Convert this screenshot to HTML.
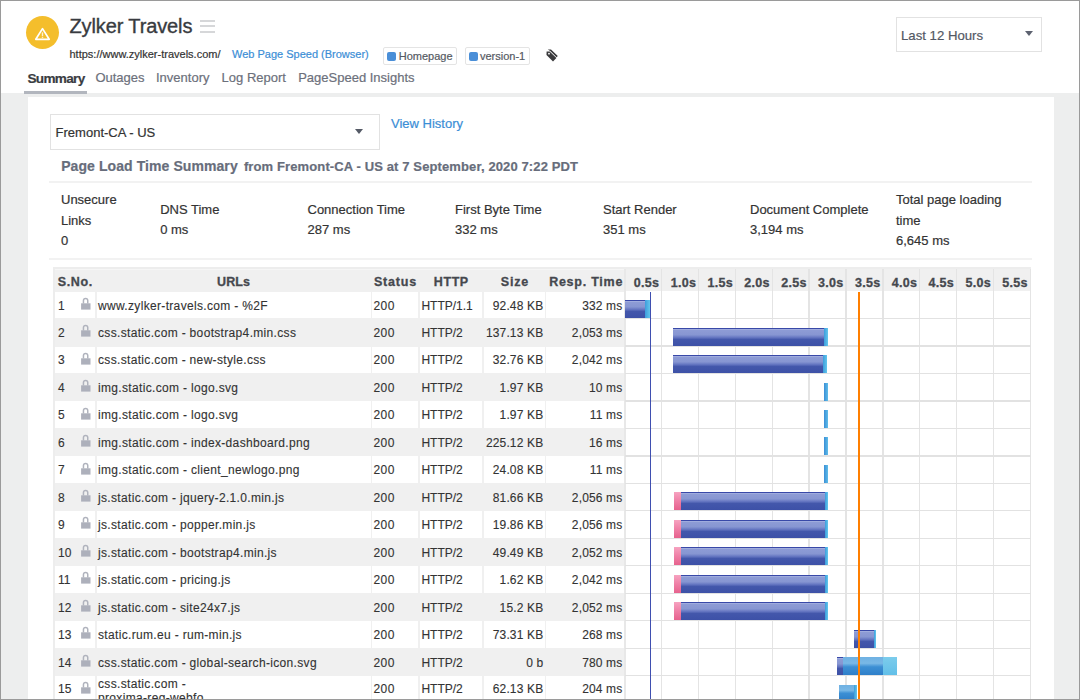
<!DOCTYPE html>
<html><head><meta charset="utf-8"><style>
*{margin:0;padding:0;box-sizing:border-box}
html,body{width:1080px;height:700px;overflow:hidden;background:#fff}
body{position:relative;font-family:"Liberation Sans",sans-serif}
.t{position:absolute;white-space:nowrap;line-height:1;font-family:"Liberation Sans",sans-serif}
.hd{font-size:12.5px;font-weight:bold;color:#45484e;text-align:center;-webkit-text-stroke:0.3px currentColor}
.s{-webkit-text-stroke:0.2px currentColor}
.tb{-webkit-text-stroke:0.12px currentColor}
.ttl{-webkit-text-stroke:0.35px currentColor}
.r{text-align:right}
.circle{position:absolute;left:26.2px;top:16.3px;width:33px;height:33px;border-radius:50%;background:#f4be2c}
.tag{position:absolute;top:47px;height:17.6px;border:1px solid #e4e4e4;border-radius:2px;background:#fff}
.sq{position:absolute;top:52px;width:9px;height:9px;border-radius:2px;background:#4a8fd8}
.box{position:absolute;border:1px solid #e2e2e2;background:#fff}
.arr{position:absolute;width:0;height:0}
.bar{position:absolute}
.bb{background:linear-gradient(#3949a8 0,#3949a8 1px,#aab5e2 1px,#8d9bd5 2.5px,#8796d2 38%,#6677c2 52%,#4357ab 64%,#3d51a7 100%)}
.cy{background:linear-gradient(90deg,#3d9ddc,#63c6ec)}
.sm{background:linear-gradient(90deg,#3b8fd6,#5fbde9)}
.pk{background:linear-gradient(#f6a3c0,#ef7fa6 50%,#e6628d)}
.md{background:linear-gradient(#6fb1e3 0,#79b8e6 35%,#3c8fd4 55%,#2f7fc9 100%)}
.lc{background:linear-gradient(#7cccec,#62bfe8)}
.frame{position:absolute;left:0;top:0;width:1080px;height:700px;border:1px solid #9a9a9a;z-index:10}
</style></head><body>
<div style="position:absolute;left:1px;top:93px;width:1078px;height:606px;background:#edeeee"></div>
<div style="position:absolute;left:27.8px;top:96.5px;width:1025.9px;height:603px;background:#fff"></div>
<div class="circle"></div>
<svg class="warn" width="18" height="15" viewBox="0 0 18 15" style="position:absolute;left:34.3px;top:26.3px">
<path d="M8.5 2.6 L15.2 13.3 L1.8 13.3 Z" fill="none" stroke="#fff" stroke-width="1.7" stroke-linejoin="round"/>
<rect x="7.8" y="6.4" width="1.4" height="3.6" fill="#fff" opacity="0.8"/><rect x="7.8" y="10.7" width="1.4" height="1.2" fill="#fff" opacity="0.8"/></svg>
<div class="t ttl" style="left:69.50px;top:16.10px;font-size:20px;color:#383b40;letter-spacing:-0.12px;">Zylker Travels</div>

<div style="position:absolute;left:200.2px;top:20.3px;width:15.2px;height:2.2px;background:#d6d7d9"></div>
<div style="position:absolute;left:200.2px;top:25.3px;width:15.2px;height:2.2px;background:#d6d7d9"></div>
<div style="position:absolute;left:200.2px;top:30.5px;width:15.2px;height:2.2px;background:#d6d7d9"></div>
<div class="t s" style="left:69.50px;top:49.07px;font-size:11px;color:#333;">https://www.zylker-travels.com/</div>

<div class="t s" style="left:232.00px;top:49.07px;font-size:11px;color:#3b8ed6;">Web Page Speed (Browser)</div>

<div class="tag" style="left:383px;width:74px"></div><div class="sq" style="left:386.5px"></div>
<div class="t s" style="left:398.70px;top:51.07px;font-size:11px;color:#555a63;">Homepage</div>

<div class="tag" style="left:465px;width:65px"></div><div class="sq" style="left:468.5px"></div>
<div class="t s" style="left:480.00px;top:51.07px;font-size:11px;color:#555a63;">version-1</div>

<svg width="14" height="15" viewBox="0 0 14 15" style="position:absolute;left:544.5px;top:47.5px">
<path d="M1.6 3.6 L4.6 3.4 L11.4 10.1 L8 13.4 L1.5 6.9 Z" fill="#3a3a3c"/>
<path d="M2.8 1.6 L6 1.5 L12.8 8.1 L11.6 9.3 L5.2 2.9 Z" fill="#3a3a3c"/>
<circle cx="4" cy="5.7" r="0.9" fill="#fff"/></svg>
<div class="t s" style="left:27.50px;top:71.71px;font-size:13.6px;font-weight:bold;color:#3a3c41;letter-spacing:-0.7px;">Summary</div>

<div class="t s" style="left:95.40px;top:71.21px;font-size:13px;color:#6c707b;">Outages</div>

<div class="t s" style="left:156.00px;top:71.21px;font-size:13px;color:#6c707b;">Inventory</div>

<div class="t s" style="left:221.60px;top:71.21px;font-size:13px;color:#6c707b;">Log Report</div>

<div class="t s" style="left:298.20px;top:71.21px;font-size:13px;color:#6c707b;">PageSpeed Insights</div>

<div style="position:absolute;left:24px;top:90.5px;width:63px;height:3px;background:#b2b6be"></div>
<div class="box" style="left:896px;top:17px;width:146px;height:34.5px"></div>
<div class="t s" style="left:901.00px;top:29.24px;font-size:13.2px;color:#535864;">Last 12 Hours</div>

<div class="arr" style="left:1024.5px;top:31px;border-left:4px solid transparent;border-right:4px solid transparent;border-top:5px solid #5d6270"></div>
<div class="box" style="left:50px;top:114.3px;width:329.5px;height:35.4px"></div>
<div class="t s" style="left:55.60px;top:126.11px;font-size:13px;color:#333;">Fremont-CA - US</div>

<div class="arr" style="left:354.5px;top:128.5px;border-left:4px solid transparent;border-right:4px solid transparent;border-top:5px solid #555a66"></div>
<div class="t s" style="left:391.00px;top:117.01px;font-size:13px;color:#3b8ed6;">View History</div>

<div class="t s" style="left:61.20px;top:158.88px;font-size:14px;font-weight:bold;color:#676d7b;letter-spacing:0.08px;">Page Load Time Summary</div>

<div class="t s" style="left:243.90px;top:159.71px;font-size:13px;font-weight:bold;color:#676d7b;letter-spacing:0.12px;">from Fremont-CA - US at 7 September, 2020 7:22 PDT</div>

<div style="position:absolute;left:49px;top:180.8px;width:982.5px;height:2px;background:#f2f2f2"></div>
<div class="t s" style="left:61.00px;top:193.11px;font-size:13px;color:#333;">Unsecure</div>

<div class="t s" style="left:61.00px;top:213.81px;font-size:13px;color:#333;">Links</div>

<div class="t s" style="left:61.00px;top:234.01px;font-size:13px;color:#333;">0</div>

<div class="t s" style="left:160.20px;top:203.41px;font-size:13px;color:#333;">DNS Time</div>

<div class="t s" style="left:160.20px;top:222.91px;font-size:13px;color:#333;">0 ms</div>

<div class="t s" style="left:307.50px;top:203.41px;font-size:13px;color:#333;">Connection Time</div>

<div class="t s" style="left:307.50px;top:222.91px;font-size:13px;color:#333;">287 ms</div>

<div class="t s" style="left:455.00px;top:203.41px;font-size:13px;color:#333;">First Byte Time</div>

<div class="t s" style="left:455.00px;top:222.91px;font-size:13px;color:#333;">332 ms</div>

<div class="t s" style="left:603.00px;top:203.41px;font-size:13px;color:#333;">Start Render</div>

<div class="t s" style="left:603.00px;top:222.91px;font-size:13px;color:#333;">351 ms</div>

<div class="t s" style="left:750.00px;top:203.41px;font-size:13px;color:#333;">Document Complete</div>

<div class="t s" style="left:750.00px;top:222.91px;font-size:13px;color:#333;">3,194 ms</div>

<div class="t s" style="left:896.00px;top:193.11px;font-size:13px;color:#333;">Total page loading</div>

<div class="t s" style="left:896.00px;top:213.81px;font-size:13px;color:#333;">time</div>

<div class="t s" style="left:896.00px;top:234.01px;font-size:13px;color:#333;">6,645 ms</div>

<div style="position:absolute;left:49px;top:258.2px;width:982.5px;height:2px;background:#f2f2f2"></div>
<div style="position:absolute;left:53px;top:267px;width:978px;height:433px;background:#ededed"></div>
<div style="position:absolute;left:55px;top:269px;width:976px;height:431px;background:#f0f0f0"></div>
<div style="position:absolute;left:55px;top:269px;width:976px;height:1px;background:#f6f6f6"></div>
<div style="position:absolute;left:55px;top:291.57px;width:40.25px;height:26.57px;background:#fff"></div>
<div style="position:absolute;left:96.75px;top:291.57px;width:273.90px;height:26.57px;background:#fff"></div>
<div style="position:absolute;left:372.15px;top:291.57px;width:46.10px;height:26.57px;background:#fff"></div>
<div style="position:absolute;left:419.75px;top:291.57px;width:62.40px;height:26.57px;background:#fff"></div>
<div style="position:absolute;left:483.65px;top:291.57px;width:61.20px;height:26.57px;background:#fff"></div>
<div style="position:absolute;left:546.35px;top:291.57px;width:78.05px;height:26.57px;background:#fff"></div>
<div class="t tb" style="left:58.00px;top:299.96px;font-size:12px;color:#333;">1</div>

<svg width="12" height="14" viewBox="0 -1 12 14" style="position:absolute;left:80.1px;top:296.72px"><path d="M3.45 5.6 V2.6 A2.15 2.15 0 0 1 7.75 2.6 V5.6" fill="none" stroke="#b0b3bd" stroke-width="1.5"/><rect x="1.1" y="5.3" width="9.4" height="6.3" fill="#adb0bb"/></svg>
<div class="t tb" style="left:98.00px;top:299.96px;font-size:12px;color:#333;letter-spacing:0.33px;">www.zylker-travels.com - %2F</div>

<div class="t tb" style="left:373.50px;top:299.96px;font-size:12px;color:#333;letter-spacing:0.4px;">200</div>

<div class="t tb" style="left:421.40px;top:299.96px;font-size:12px;color:#333;">HTTP/1.1</div>

<div class="t r tb" style="right:536.7px;top:299.96px;font-size:12px;color:#333;letter-spacing:0.15px">92.48 KB</div>
<div class="t r tb" style="right:457.6px;top:299.96px;font-size:12px;color:#333;letter-spacing:0.15px">332 ms</div>
<div class="t tb" style="left:58.00px;top:326.93px;font-size:12px;color:#333;">2</div>

<svg width="12" height="14" viewBox="0 -1 12 14" style="position:absolute;left:80.1px;top:324.19px"><path d="M3.45 5.6 V2.6 A2.15 2.15 0 0 1 7.75 2.6 V5.6" fill="none" stroke="#b0b3bd" stroke-width="1.5"/><rect x="1.1" y="5.3" width="9.4" height="6.3" fill="#adb0bb"/></svg>
<div class="t tb" style="left:98.00px;top:326.93px;font-size:12px;color:#333;letter-spacing:0.33px;">css.static.com - bootstrap4.min.css</div>

<div class="t tb" style="left:373.50px;top:326.93px;font-size:12px;color:#333;letter-spacing:0.4px;">200</div>

<div class="t tb" style="left:421.40px;top:326.93px;font-size:12px;color:#333;">HTTP/2</div>

<div class="t r tb" style="right:536.7px;top:326.93px;font-size:12px;color:#333;letter-spacing:0.15px">137.13 KB</div>
<div class="t r tb" style="right:457.6px;top:326.93px;font-size:12px;color:#333;letter-spacing:0.15px">2,053 ms</div>
<div style="position:absolute;left:55px;top:346.51px;width:40.25px;height:26.57px;background:#fff"></div>
<div style="position:absolute;left:96.75px;top:346.51px;width:273.90px;height:26.57px;background:#fff"></div>
<div style="position:absolute;left:372.15px;top:346.51px;width:46.10px;height:26.57px;background:#fff"></div>
<div style="position:absolute;left:419.75px;top:346.51px;width:62.40px;height:26.57px;background:#fff"></div>
<div style="position:absolute;left:483.65px;top:346.51px;width:61.20px;height:26.57px;background:#fff"></div>
<div style="position:absolute;left:546.35px;top:346.51px;width:78.05px;height:26.57px;background:#fff"></div>
<div class="t tb" style="left:58.00px;top:354.40px;font-size:12px;color:#333;">3</div>

<svg width="12" height="14" viewBox="0 -1 12 14" style="position:absolute;left:80.1px;top:351.66px"><path d="M3.45 5.6 V2.6 A2.15 2.15 0 0 1 7.75 2.6 V5.6" fill="none" stroke="#b0b3bd" stroke-width="1.5"/><rect x="1.1" y="5.3" width="9.4" height="6.3" fill="#adb0bb"/></svg>
<div class="t tb" style="left:98.00px;top:354.40px;font-size:12px;color:#333;letter-spacing:0.33px;">css.static.com - new-style.css</div>

<div class="t tb" style="left:373.50px;top:354.40px;font-size:12px;color:#333;letter-spacing:0.4px;">200</div>

<div class="t tb" style="left:421.40px;top:354.40px;font-size:12px;color:#333;">HTTP/2</div>

<div class="t r tb" style="right:536.7px;top:354.40px;font-size:12px;color:#333;letter-spacing:0.15px">32.76 KB</div>
<div class="t r tb" style="right:457.6px;top:354.40px;font-size:12px;color:#333;letter-spacing:0.15px">2,042 ms</div>
<div class="t tb" style="left:58.00px;top:381.87px;font-size:12px;color:#333;">4</div>

<svg width="12" height="14" viewBox="0 -1 12 14" style="position:absolute;left:80.1px;top:379.13px"><path d="M3.45 5.6 V2.6 A2.15 2.15 0 0 1 7.75 2.6 V5.6" fill="none" stroke="#b0b3bd" stroke-width="1.5"/><rect x="1.1" y="5.3" width="9.4" height="6.3" fill="#adb0bb"/></svg>
<div class="t tb" style="left:98.00px;top:381.87px;font-size:12px;color:#333;letter-spacing:0.33px;">img.static.com - logo.svg</div>

<div class="t tb" style="left:373.50px;top:381.87px;font-size:12px;color:#333;letter-spacing:0.4px;">200</div>

<div class="t tb" style="left:421.40px;top:381.87px;font-size:12px;color:#333;">HTTP/2</div>

<div class="t r tb" style="right:536.7px;top:381.87px;font-size:12px;color:#333;letter-spacing:0.15px">1.97 KB</div>
<div class="t r tb" style="right:457.6px;top:381.87px;font-size:12px;color:#333;letter-spacing:0.15px">10 ms</div>
<div style="position:absolute;left:55px;top:401.45px;width:40.25px;height:26.57px;background:#fff"></div>
<div style="position:absolute;left:96.75px;top:401.45px;width:273.90px;height:26.57px;background:#fff"></div>
<div style="position:absolute;left:372.15px;top:401.45px;width:46.10px;height:26.57px;background:#fff"></div>
<div style="position:absolute;left:419.75px;top:401.45px;width:62.40px;height:26.57px;background:#fff"></div>
<div style="position:absolute;left:483.65px;top:401.45px;width:61.20px;height:26.57px;background:#fff"></div>
<div style="position:absolute;left:546.35px;top:401.45px;width:78.05px;height:26.57px;background:#fff"></div>
<div class="t tb" style="left:58.00px;top:409.34px;font-size:12px;color:#333;">5</div>

<svg width="12" height="14" viewBox="0 -1 12 14" style="position:absolute;left:80.1px;top:406.60px"><path d="M3.45 5.6 V2.6 A2.15 2.15 0 0 1 7.75 2.6 V5.6" fill="none" stroke="#b0b3bd" stroke-width="1.5"/><rect x="1.1" y="5.3" width="9.4" height="6.3" fill="#adb0bb"/></svg>
<div class="t tb" style="left:98.00px;top:409.34px;font-size:12px;color:#333;letter-spacing:0.33px;">img.static.com - logo.svg</div>

<div class="t tb" style="left:373.50px;top:409.34px;font-size:12px;color:#333;letter-spacing:0.4px;">200</div>

<div class="t tb" style="left:421.40px;top:409.34px;font-size:12px;color:#333;">HTTP/2</div>

<div class="t r tb" style="right:536.7px;top:409.34px;font-size:12px;color:#333;letter-spacing:0.15px">1.97 KB</div>
<div class="t r tb" style="right:457.6px;top:409.34px;font-size:12px;color:#333;letter-spacing:0.15px">11 ms</div>
<div class="t tb" style="left:58.00px;top:436.81px;font-size:12px;color:#333;">6</div>

<svg width="12" height="14" viewBox="0 -1 12 14" style="position:absolute;left:80.1px;top:434.07px"><path d="M3.45 5.6 V2.6 A2.15 2.15 0 0 1 7.75 2.6 V5.6" fill="none" stroke="#b0b3bd" stroke-width="1.5"/><rect x="1.1" y="5.3" width="9.4" height="6.3" fill="#adb0bb"/></svg>
<div class="t tb" style="left:98.00px;top:436.81px;font-size:12px;color:#333;letter-spacing:0.33px;">img.static.com - index-dashboard.png</div>

<div class="t tb" style="left:373.50px;top:436.81px;font-size:12px;color:#333;letter-spacing:0.4px;">200</div>

<div class="t tb" style="left:421.40px;top:436.81px;font-size:12px;color:#333;">HTTP/2</div>

<div class="t r tb" style="right:536.7px;top:436.81px;font-size:12px;color:#333;letter-spacing:0.15px">225.12 KB</div>
<div class="t r tb" style="right:457.6px;top:436.81px;font-size:12px;color:#333;letter-spacing:0.15px">16 ms</div>
<div style="position:absolute;left:55px;top:456.39px;width:40.25px;height:26.57px;background:#fff"></div>
<div style="position:absolute;left:96.75px;top:456.39px;width:273.90px;height:26.57px;background:#fff"></div>
<div style="position:absolute;left:372.15px;top:456.39px;width:46.10px;height:26.57px;background:#fff"></div>
<div style="position:absolute;left:419.75px;top:456.39px;width:62.40px;height:26.57px;background:#fff"></div>
<div style="position:absolute;left:483.65px;top:456.39px;width:61.20px;height:26.57px;background:#fff"></div>
<div style="position:absolute;left:546.35px;top:456.39px;width:78.05px;height:26.57px;background:#fff"></div>
<div class="t tb" style="left:58.00px;top:464.28px;font-size:12px;color:#333;">7</div>

<svg width="12" height="14" viewBox="0 -1 12 14" style="position:absolute;left:80.1px;top:461.54px"><path d="M3.45 5.6 V2.6 A2.15 2.15 0 0 1 7.75 2.6 V5.6" fill="none" stroke="#b0b3bd" stroke-width="1.5"/><rect x="1.1" y="5.3" width="9.4" height="6.3" fill="#adb0bb"/></svg>
<div class="t tb" style="left:98.00px;top:464.28px;font-size:12px;color:#333;letter-spacing:0.33px;">img.static.com - client_newlogo.png</div>

<div class="t tb" style="left:373.50px;top:464.28px;font-size:12px;color:#333;letter-spacing:0.4px;">200</div>

<div class="t tb" style="left:421.40px;top:464.28px;font-size:12px;color:#333;">HTTP/2</div>

<div class="t r tb" style="right:536.7px;top:464.28px;font-size:12px;color:#333;letter-spacing:0.15px">24.08 KB</div>
<div class="t r tb" style="right:457.6px;top:464.28px;font-size:12px;color:#333;letter-spacing:0.15px">11 ms</div>
<div class="t tb" style="left:58.00px;top:491.75px;font-size:12px;color:#333;">8</div>

<svg width="12" height="14" viewBox="0 -1 12 14" style="position:absolute;left:80.1px;top:489.01px"><path d="M3.45 5.6 V2.6 A2.15 2.15 0 0 1 7.75 2.6 V5.6" fill="none" stroke="#b0b3bd" stroke-width="1.5"/><rect x="1.1" y="5.3" width="9.4" height="6.3" fill="#adb0bb"/></svg>
<div class="t tb" style="left:98.00px;top:491.75px;font-size:12px;color:#333;letter-spacing:0.33px;">js.static.com - jquery-2.1.0.min.js</div>

<div class="t tb" style="left:373.50px;top:491.75px;font-size:12px;color:#333;letter-spacing:0.4px;">200</div>

<div class="t tb" style="left:421.40px;top:491.75px;font-size:12px;color:#333;">HTTP/2</div>

<div class="t r tb" style="right:536.7px;top:491.75px;font-size:12px;color:#333;letter-spacing:0.15px">81.66 KB</div>
<div class="t r tb" style="right:457.6px;top:491.75px;font-size:12px;color:#333;letter-spacing:0.15px">2,056 ms</div>
<div style="position:absolute;left:55px;top:511.33px;width:40.25px;height:26.57px;background:#fff"></div>
<div style="position:absolute;left:96.75px;top:511.33px;width:273.90px;height:26.57px;background:#fff"></div>
<div style="position:absolute;left:372.15px;top:511.33px;width:46.10px;height:26.57px;background:#fff"></div>
<div style="position:absolute;left:419.75px;top:511.33px;width:62.40px;height:26.57px;background:#fff"></div>
<div style="position:absolute;left:483.65px;top:511.33px;width:61.20px;height:26.57px;background:#fff"></div>
<div style="position:absolute;left:546.35px;top:511.33px;width:78.05px;height:26.57px;background:#fff"></div>
<div class="t tb" style="left:58.00px;top:519.22px;font-size:12px;color:#333;">9</div>

<svg width="12" height="14" viewBox="0 -1 12 14" style="position:absolute;left:80.1px;top:516.48px"><path d="M3.45 5.6 V2.6 A2.15 2.15 0 0 1 7.75 2.6 V5.6" fill="none" stroke="#b0b3bd" stroke-width="1.5"/><rect x="1.1" y="5.3" width="9.4" height="6.3" fill="#adb0bb"/></svg>
<div class="t tb" style="left:98.00px;top:519.22px;font-size:12px;color:#333;letter-spacing:0.33px;">js.static.com - popper.min.js</div>

<div class="t tb" style="left:373.50px;top:519.22px;font-size:12px;color:#333;letter-spacing:0.4px;">200</div>

<div class="t tb" style="left:421.40px;top:519.22px;font-size:12px;color:#333;">HTTP/2</div>

<div class="t r tb" style="right:536.7px;top:519.22px;font-size:12px;color:#333;letter-spacing:0.15px">19.86 KB</div>
<div class="t r tb" style="right:457.6px;top:519.22px;font-size:12px;color:#333;letter-spacing:0.15px">2,056 ms</div>
<div class="t tb" style="left:58.00px;top:546.69px;font-size:12px;color:#333;">10</div>

<svg width="12" height="14" viewBox="0 -1 12 14" style="position:absolute;left:80.1px;top:543.95px"><path d="M3.45 5.6 V2.6 A2.15 2.15 0 0 1 7.75 2.6 V5.6" fill="none" stroke="#b0b3bd" stroke-width="1.5"/><rect x="1.1" y="5.3" width="9.4" height="6.3" fill="#adb0bb"/></svg>
<div class="t tb" style="left:98.00px;top:546.69px;font-size:12px;color:#333;letter-spacing:0.33px;">js.static.com - bootstrap4.min.js</div>

<div class="t tb" style="left:373.50px;top:546.69px;font-size:12px;color:#333;letter-spacing:0.4px;">200</div>

<div class="t tb" style="left:421.40px;top:546.69px;font-size:12px;color:#333;">HTTP/2</div>

<div class="t r tb" style="right:536.7px;top:546.69px;font-size:12px;color:#333;letter-spacing:0.15px">49.49 KB</div>
<div class="t r tb" style="right:457.6px;top:546.69px;font-size:12px;color:#333;letter-spacing:0.15px">2,052 ms</div>
<div style="position:absolute;left:55px;top:566.27px;width:40.25px;height:26.57px;background:#fff"></div>
<div style="position:absolute;left:96.75px;top:566.27px;width:273.90px;height:26.57px;background:#fff"></div>
<div style="position:absolute;left:372.15px;top:566.27px;width:46.10px;height:26.57px;background:#fff"></div>
<div style="position:absolute;left:419.75px;top:566.27px;width:62.40px;height:26.57px;background:#fff"></div>
<div style="position:absolute;left:483.65px;top:566.27px;width:61.20px;height:26.57px;background:#fff"></div>
<div style="position:absolute;left:546.35px;top:566.27px;width:78.05px;height:26.57px;background:#fff"></div>
<div class="t tb" style="left:58.00px;top:574.16px;font-size:12px;color:#333;">11</div>

<svg width="12" height="14" viewBox="0 -1 12 14" style="position:absolute;left:80.1px;top:571.42px"><path d="M3.45 5.6 V2.6 A2.15 2.15 0 0 1 7.75 2.6 V5.6" fill="none" stroke="#b0b3bd" stroke-width="1.5"/><rect x="1.1" y="5.3" width="9.4" height="6.3" fill="#adb0bb"/></svg>
<div class="t tb" style="left:98.00px;top:574.16px;font-size:12px;color:#333;letter-spacing:0.33px;">js.static.com - pricing.js</div>

<div class="t tb" style="left:373.50px;top:574.16px;font-size:12px;color:#333;letter-spacing:0.4px;">200</div>

<div class="t tb" style="left:421.40px;top:574.16px;font-size:12px;color:#333;">HTTP/2</div>

<div class="t r tb" style="right:536.7px;top:574.16px;font-size:12px;color:#333;letter-spacing:0.15px">1.62 KB</div>
<div class="t r tb" style="right:457.6px;top:574.16px;font-size:12px;color:#333;letter-spacing:0.15px">2,042 ms</div>
<div class="t tb" style="left:58.00px;top:601.63px;font-size:12px;color:#333;">12</div>

<svg width="12" height="14" viewBox="0 -1 12 14" style="position:absolute;left:80.1px;top:598.89px"><path d="M3.45 5.6 V2.6 A2.15 2.15 0 0 1 7.75 2.6 V5.6" fill="none" stroke="#b0b3bd" stroke-width="1.5"/><rect x="1.1" y="5.3" width="9.4" height="6.3" fill="#adb0bb"/></svg>
<div class="t tb" style="left:98.00px;top:601.63px;font-size:12px;color:#333;letter-spacing:0.33px;">js.static.com - site24x7.js</div>

<div class="t tb" style="left:373.50px;top:601.63px;font-size:12px;color:#333;letter-spacing:0.4px;">200</div>

<div class="t tb" style="left:421.40px;top:601.63px;font-size:12px;color:#333;">HTTP/2</div>

<div class="t r tb" style="right:536.7px;top:601.63px;font-size:12px;color:#333;letter-spacing:0.15px">15.2 KB</div>
<div class="t r tb" style="right:457.6px;top:601.63px;font-size:12px;color:#333;letter-spacing:0.15px">2,052 ms</div>
<div style="position:absolute;left:55px;top:621.21px;width:40.25px;height:26.57px;background:#fff"></div>
<div style="position:absolute;left:96.75px;top:621.21px;width:273.90px;height:26.57px;background:#fff"></div>
<div style="position:absolute;left:372.15px;top:621.21px;width:46.10px;height:26.57px;background:#fff"></div>
<div style="position:absolute;left:419.75px;top:621.21px;width:62.40px;height:26.57px;background:#fff"></div>
<div style="position:absolute;left:483.65px;top:621.21px;width:61.20px;height:26.57px;background:#fff"></div>
<div style="position:absolute;left:546.35px;top:621.21px;width:78.05px;height:26.57px;background:#fff"></div>
<div class="t tb" style="left:58.00px;top:629.10px;font-size:12px;color:#333;">13</div>

<svg width="12" height="14" viewBox="0 -1 12 14" style="position:absolute;left:80.1px;top:626.36px"><path d="M3.45 5.6 V2.6 A2.15 2.15 0 0 1 7.75 2.6 V5.6" fill="none" stroke="#b0b3bd" stroke-width="1.5"/><rect x="1.1" y="5.3" width="9.4" height="6.3" fill="#adb0bb"/></svg>
<div class="t tb" style="left:98.00px;top:629.10px;font-size:12px;color:#333;letter-spacing:0.33px;">static.rum.eu - rum-min.js</div>

<div class="t tb" style="left:373.50px;top:629.10px;font-size:12px;color:#333;letter-spacing:0.4px;">200</div>

<div class="t tb" style="left:421.40px;top:629.10px;font-size:12px;color:#333;">HTTP/2</div>

<div class="t r tb" style="right:536.7px;top:629.10px;font-size:12px;color:#333;letter-spacing:0.15px">73.31 KB</div>
<div class="t r tb" style="right:457.6px;top:629.10px;font-size:12px;color:#333;letter-spacing:0.15px">268 ms</div>
<div class="t tb" style="left:58.00px;top:656.57px;font-size:12px;color:#333;">14</div>

<svg width="12" height="14" viewBox="0 -1 12 14" style="position:absolute;left:80.1px;top:653.83px"><path d="M3.45 5.6 V2.6 A2.15 2.15 0 0 1 7.75 2.6 V5.6" fill="none" stroke="#b0b3bd" stroke-width="1.5"/><rect x="1.1" y="5.3" width="9.4" height="6.3" fill="#adb0bb"/></svg>
<div class="t tb" style="left:98.00px;top:656.57px;font-size:12px;color:#333;letter-spacing:0.33px;">css.static.com - global-search-icon.svg</div>

<div class="t tb" style="left:373.50px;top:656.57px;font-size:12px;color:#333;letter-spacing:0.4px;">200</div>

<div class="t tb" style="left:421.40px;top:656.57px;font-size:12px;color:#333;">HTTP/2</div>

<div class="t r tb" style="right:536.7px;top:656.57px;font-size:12px;color:#333;letter-spacing:0.15px">0 b</div>
<div class="t r tb" style="right:457.6px;top:656.57px;font-size:12px;color:#333;letter-spacing:0.15px">780 ms</div>
<div style="position:absolute;left:55px;top:676.15px;width:40.25px;height:24.30px;background:#fff"></div>
<div style="position:absolute;left:96.75px;top:676.15px;width:273.90px;height:24.30px;background:#fff"></div>
<div style="position:absolute;left:372.15px;top:676.15px;width:46.10px;height:24.30px;background:#fff"></div>
<div style="position:absolute;left:419.75px;top:676.15px;width:62.40px;height:24.30px;background:#fff"></div>
<div style="position:absolute;left:483.65px;top:676.15px;width:61.20px;height:24.30px;background:#fff"></div>
<div style="position:absolute;left:546.35px;top:676.15px;width:78.05px;height:24.30px;background:#fff"></div>
<div class="t tb" style="left:58.00px;top:683.34px;font-size:12px;color:#333;">15</div>

<svg width="12" height="14" viewBox="0 -1 12 14" style="position:absolute;left:80.1px;top:681.30px"><path d="M3.45 5.6 V2.6 A2.15 2.15 0 0 1 7.75 2.6 V5.6" fill="none" stroke="#b0b3bd" stroke-width="1.5"/><rect x="1.1" y="5.3" width="9.4" height="6.3" fill="#adb0bb"/></svg>
<div class="t tb" style="left:98px;top:676.74px;font-size:12px;line-height:14px;color:#333;letter-spacing:0.33px;">css.static.com -<br>proxima-reg-webfo</div>
<div class="t tb" style="left:373.50px;top:683.34px;font-size:12px;color:#333;letter-spacing:0.4px;">200</div>

<div class="t tb" style="left:421.40px;top:683.34px;font-size:12px;color:#333;">HTTP/2</div>

<div class="t r tb" style="right:536.7px;top:683.34px;font-size:12px;color:#333;letter-spacing:0.15px">62.13 KB</div>
<div class="t r tb" style="right:457.6px;top:683.34px;font-size:12px;color:#333;letter-spacing:0.15px">204 ms</div>
<div class="t hd" style="left:57.8px;top:275.52px;letter-spacing:0.6px">S.No.</div>
<div class="t hd" style="left:97px;width:273px;top:275.52px;letter-spacing:0.1px;text-indent:0.1px">URLs</div>
<div class="t hd" style="left:372px;width:46px;top:275.52px;letter-spacing:0.8px;text-indent:0.8px">Status</div>
<div class="t hd" style="left:420px;width:62px;top:275.52px;letter-spacing:0.6px;text-indent:0.6px">HTTP</div>
<div class="t hd" style="left:484px;width:61px;top:275.52px;letter-spacing:0.75px;text-indent:0.75px">Size</div>
<div class="t hd" style="left:547px;width:77.5px;top:275.52px;letter-spacing:0.75px;text-indent:0.75px">Resp. Time</div>
<div style="position:absolute;left:624.95px;top:269px;width:406.04999999999995px;height:22.120000000000005px;background:#f0f0f0"></div>
<div style="position:absolute;left:624.4px;top:291.12px;width:406.60px;height:408.88px;background:#fff"></div>
<div style="position:absolute;left:624.4px;top:269px;width:1.5px;height:431px;background:#e8e8e8"></div>
<div style="position:absolute;left:661.05px;top:269px;width:1.4px;height:431px;background:#e4e4e4"></div>
<div class="t hd" style="right:420.70px;top:277.02px;letter-spacing:0.3px">0.5s</div>
<div style="position:absolute;left:697.90px;top:269px;width:1.4px;height:431px;background:#e4e4e4"></div>
<div class="t hd" style="right:383.85px;top:277.02px;letter-spacing:0.3px">1.0s</div>
<div style="position:absolute;left:734.75px;top:269px;width:1.4px;height:431px;background:#e4e4e4"></div>
<div class="t hd" style="right:347.00px;top:277.02px;letter-spacing:0.3px">1.5s</div>
<div style="position:absolute;left:771.60px;top:269px;width:1.4px;height:431px;background:#e4e4e4"></div>
<div class="t hd" style="right:310.15px;top:277.02px;letter-spacing:0.3px">2.0s</div>
<div style="position:absolute;left:808.45px;top:269px;width:1.4px;height:431px;background:#e4e4e4"></div>
<div class="t hd" style="right:273.30px;top:277.02px;letter-spacing:0.3px">2.5s</div>
<div style="position:absolute;left:845.30px;top:269px;width:1.4px;height:431px;background:#e4e4e4"></div>
<div class="t hd" style="right:236.45px;top:277.02px;letter-spacing:0.3px">3.0s</div>
<div style="position:absolute;left:882.15px;top:269px;width:1.4px;height:431px;background:#e4e4e4"></div>
<div class="t hd" style="right:199.60px;top:277.02px;letter-spacing:0.3px">3.5s</div>
<div style="position:absolute;left:919.00px;top:269px;width:1.4px;height:431px;background:#e4e4e4"></div>
<div class="t hd" style="right:162.75px;top:277.02px;letter-spacing:0.3px">4.0s</div>
<div style="position:absolute;left:955.85px;top:269px;width:1.4px;height:431px;background:#e4e4e4"></div>
<div class="t hd" style="right:125.90px;top:277.02px;letter-spacing:0.3px">4.5s</div>
<div style="position:absolute;left:992.70px;top:269px;width:1.4px;height:431px;background:#e4e4e4"></div>
<div class="t hd" style="right:89.05px;top:277.02px;letter-spacing:0.3px">5.0s</div>
<div style="position:absolute;left:1029.55px;top:269px;width:1.4px;height:431px;background:#e4e4e4"></div>
<div class="t hd" style="right:52.20px;top:277.02px;letter-spacing:0.3px">5.5s</div>
<div style="position:absolute;left:624.95px;top:317.99px;width:406.04999999999995px;height:1.2px;background:#e2e2e2"></div>
<div style="position:absolute;left:624.95px;top:345.46px;width:406.04999999999995px;height:1.2px;background:#e2e2e2"></div>
<div style="position:absolute;left:624.95px;top:372.93px;width:406.04999999999995px;height:1.2px;background:#e2e2e2"></div>
<div style="position:absolute;left:624.95px;top:400.40px;width:406.04999999999995px;height:1.2px;background:#e2e2e2"></div>
<div style="position:absolute;left:624.95px;top:427.87px;width:406.04999999999995px;height:1.2px;background:#e2e2e2"></div>
<div style="position:absolute;left:624.95px;top:455.34px;width:406.04999999999995px;height:1.2px;background:#e2e2e2"></div>
<div style="position:absolute;left:624.95px;top:482.81px;width:406.04999999999995px;height:1.2px;background:#e2e2e2"></div>
<div style="position:absolute;left:624.95px;top:510.28px;width:406.04999999999995px;height:1.2px;background:#e2e2e2"></div>
<div style="position:absolute;left:624.95px;top:537.75px;width:406.04999999999995px;height:1.2px;background:#e2e2e2"></div>
<div style="position:absolute;left:624.95px;top:565.22px;width:406.04999999999995px;height:1.2px;background:#e2e2e2"></div>
<div style="position:absolute;left:624.95px;top:592.69px;width:406.04999999999995px;height:1.2px;background:#e2e2e2"></div>
<div style="position:absolute;left:624.95px;top:620.16px;width:406.04999999999995px;height:1.2px;background:#e2e2e2"></div>
<div style="position:absolute;left:624.95px;top:647.63px;width:406.04999999999995px;height:1.2px;background:#e2e2e2"></div>
<div style="position:absolute;left:624.95px;top:675.10px;width:406.04999999999995px;height:1.2px;background:#e2e2e2"></div>
<div class="bar bb" style="left:625.00px;top:300.12px;width:19.50px;height:18px"></div><div class="bar cy" style="left:644.50px;top:300.12px;width:5.50px;height:18px"></div>
<div class="bar bb" style="left:673.00px;top:327.59px;width:151.10px;height:18px"></div><div class="bar cy" style="left:824.10px;top:327.59px;width:3.50px;height:18px"></div>
<div class="bar bb" style="left:673.00px;top:355.06px;width:150.30px;height:18px"></div><div class="bar cy" style="left:823.30px;top:355.06px;width:3.50px;height:18px"></div>
<div class="bar sm" style="left:824px;top:382.53px;width:4px;height:18px"></div>
<div class="bar sm" style="left:824px;top:410.00px;width:4px;height:18px"></div>
<div class="bar sm" style="left:824px;top:437.47px;width:4px;height:18px"></div>
<div class="bar sm" style="left:824px;top:464.94px;width:4px;height:18px"></div>
<div class="bar pk" style="left:674px;top:492.41px;width:7px;height:18px"></div>
<div class="bar bb" style="left:681.00px;top:492.41px;width:143.50px;height:18px"></div><div class="bar cy" style="left:824.50px;top:492.41px;width:3.50px;height:18px"></div>
<div class="bar pk" style="left:674px;top:519.88px;width:7px;height:18px"></div>
<div class="bar bb" style="left:681.00px;top:519.88px;width:143.50px;height:18px"></div><div class="bar cy" style="left:824.50px;top:519.88px;width:3.50px;height:18px"></div>
<div class="bar pk" style="left:674px;top:547.35px;width:7px;height:18px"></div>
<div class="bar bb" style="left:681.00px;top:547.35px;width:143.50px;height:18px"></div><div class="bar cy" style="left:824.50px;top:547.35px;width:3.50px;height:18px"></div>
<div class="bar pk" style="left:674px;top:574.82px;width:7px;height:18px"></div>
<div class="bar bb" style="left:681.00px;top:574.82px;width:143.50px;height:18px"></div><div class="bar cy" style="left:824.50px;top:574.82px;width:3.50px;height:18px"></div>
<div class="bar pk" style="left:674px;top:602.29px;width:7px;height:18px"></div>
<div class="bar bb" style="left:681.00px;top:602.29px;width:143.50px;height:18px"></div><div class="bar cy" style="left:824.50px;top:602.29px;width:3.50px;height:18px"></div>
<div class="bar bb" style="left:854.20px;top:629.76px;width:19.70px;height:18px"></div><div class="bar cy" style="left:873.90px;top:629.76px;width:2.50px;height:18px"></div>
<div class="bar bb" style="left:837.2px;top:657.23px;width:6px;height:18px"></div>
<div class="bar md" style="left:843.2px;top:657.23px;width:40px;height:18px"></div>
<div class="bar lc" style="left:883.2px;top:657.23px;width:13.8px;height:18px"></div>
<div class="bar md" style="left:839.2px;top:685.20px;width:15px;height:14.80px"></div>
<div class="bar cy" style="left:854.2px;top:685.20px;width:2.8px;height:14.80px"></div>
<div style="position:absolute;left:650px;top:291.62px;width:1.2px;height:408.88px;background:#3f4fb0"></div>
<div style="position:absolute;left:858px;top:291.62px;width:2px;height:408.88px;background:#ff7f00"></div>
<div class="frame"></div>
</body></html>
